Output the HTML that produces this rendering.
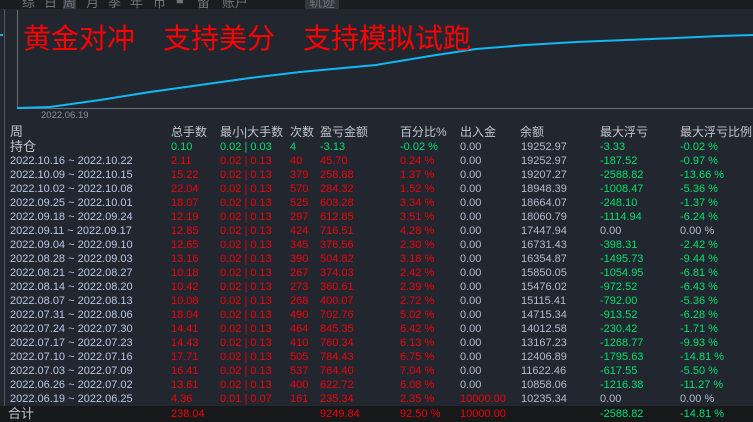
<!DOCTYPE html>
<html><head><meta charset="utf-8"><style>
*{margin:0;padding:0}
body{width:753px;height:422px;overflow:hidden;background:#22272f;font-family:"Liberation Sans","Noto Sans CJK SC",sans-serif;position:relative}
.top{position:absolute;left:0;top:0;width:753px;height:9px;background:#1b1c1e;overflow:hidden}
.top span{position:absolute;top:-8px;font-size:13px;color:#70757c}
.big{position:absolute;left:23px;top:17px;font-size:28px;color:#f00;font-family:"Noto Sans CJK SC",sans-serif;white-space:pre;line-height:40px}
.r{position:absolute;left:0;width:753px;height:14px;font-size:11px;line-height:14px;white-space:nowrap}
.r span{position:absolute}
.d{color:#b8c8e4}.g{color:#b4bccc}.R{color:#f0000a}.G{color:#00e070}.h{color:#c0c6d0;font-size:13px}
</style></head><body>
<div class="top"><span style="left:22px">综</span><span style="left:44px">日</span><span style="left:63px;background:#33373d">周</span><span style="left:86px">月</span><span style="left:108px">季</span><span style="left:130px">年</span><span style="left:153px">币</span><span style="left:176px">■</span><span style="left:197px">留</span><span style="left:222px">账户</span><span style="left:305px;background:#33373d;padding:0 4px">轨迹</span></div>
<div style="position:absolute;left:4px;top:9px;width:1px;height:413px;background:#55595f"></div>
<div style="position:absolute;left:0;top:34px;width:3px;height:2px;background:#1ab0f0"></div>
<div style="position:absolute;left:17px;top:10px;width:1px;height:99px;background:#6a6e74"></div>
<div style="position:absolute;left:17px;top:108px;width:736px;height:1px;background:#6a6e74"></div>
<svg style="position:absolute;left:0;top:0" width="753" height="120"><polyline fill="none" stroke="#12b8f4" stroke-width="2" points="17,108 50,107 100,100 150,92 200,85 250,78 300,72 376,65 430,56 476,49 526,45 576,42 626,40 676,38 720,36 753,35"/></svg>
<div class="big">黄金对冲　支持美分　支持模拟试跑</div>
<div style="position:absolute;left:41px;top:110px;font-size:9.5px;color:#8a9098">2022.06.19</div>
<div style="position:absolute;left:0;top:406px;width:753px;height:16px;background:#17181a"></div>
<div class="r" style="top:125px"><span class="h" style="left:10px">周</span><span class="h" style="left:171px;font-size:12px">总手数</span><span class="h" style="left:220px;font-size:12px">最小|大手数</span><span class="h" style="left:290px;font-size:12px">次数</span><span class="h" style="left:320px;font-size:12px">盈亏金额</span><span class="h" style="left:400px;font-size:12px">百分比%</span><span class="h" style="left:460px;font-size:12px">出入金</span><span class="h" style="left:520px;font-size:12px">余额</span><span class="h" style="left:600px;font-size:12px">最大浮亏</span><span class="h" style="left:680px;font-size:12px">最大浮亏比例</span></div>
<div class="r" style="top:140px"><span class="h" style="left:10px">持仓</span><span class="G" style="left:171px">0.10</span><span class="G" style="left:220px">0.02 | 0.03</span><span class="G" style="left:290px">4</span><span class="G" style="left:320px">-3.13</span><span class="G" style="left:400px">-0.02 %</span><span class="g" style="left:460px">0.00</span><span class="g" style="left:521px">19252.97</span><span class="G" style="left:600px">-3.33</span><span class="G" style="left:680px">-0.02 %</span></div>
<div class="r" style="top:154px"><span class="d" style="left:10px">2022.10.16 ~ 2022.10.22</span><span class="R" style="left:171px">2.11</span><span class="R" style="left:220px">0.02 | 0.13</span><span class="R" style="left:290px">40</span><span class="R" style="left:320px">45.70</span><span class="R" style="left:400px">0.24 %</span><span class="g" style="left:460px">0.00</span><span class="g" style="left:521px">19252.97</span><span class="G" style="left:600px">-187.52</span><span class="G" style="left:680px">-0.97 %</span></div>
<div class="r" style="top:168px"><span class="d" style="left:10px">2022.10.09 ~ 2022.10.15</span><span class="R" style="left:171px">15.22</span><span class="R" style="left:220px">0.02 | 0.13</span><span class="R" style="left:290px">379</span><span class="R" style="left:320px">258.88</span><span class="R" style="left:400px">1.37 %</span><span class="g" style="left:460px">0.00</span><span class="g" style="left:521px">19207.27</span><span class="G" style="left:600px">-2588.82</span><span class="G" style="left:680px">-13.66 %</span></div>
<div class="r" style="top:182px"><span class="d" style="left:10px">2022.10.02 ~ 2022.10.08</span><span class="R" style="left:171px">22.04</span><span class="R" style="left:220px">0.02 | 0.13</span><span class="R" style="left:290px">570</span><span class="R" style="left:320px">284.32</span><span class="R" style="left:400px">1.52 %</span><span class="g" style="left:460px">0.00</span><span class="g" style="left:521px">18948.39</span><span class="G" style="left:600px">-1008.47</span><span class="G" style="left:680px">-5.36 %</span></div>
<div class="r" style="top:196px"><span class="d" style="left:10px">2022.09.25 ~ 2022.10.01</span><span class="R" style="left:171px">18.07</span><span class="R" style="left:220px">0.02 | 0.13</span><span class="R" style="left:290px">525</span><span class="R" style="left:320px">603.28</span><span class="R" style="left:400px">3.34 %</span><span class="g" style="left:460px">0.00</span><span class="g" style="left:521px">18664.07</span><span class="G" style="left:600px">-248.10</span><span class="G" style="left:680px">-1.37 %</span></div>
<div class="r" style="top:210px"><span class="d" style="left:10px">2022.09.18 ~ 2022.09.24</span><span class="R" style="left:171px">12.19</span><span class="R" style="left:220px">0.02 | 0.13</span><span class="R" style="left:290px">297</span><span class="R" style="left:320px">612.85</span><span class="R" style="left:400px">3.51 %</span><span class="g" style="left:460px">0.00</span><span class="g" style="left:521px">18060.79</span><span class="G" style="left:600px">-1114.94</span><span class="G" style="left:680px">-6.24 %</span></div>
<div class="r" style="top:224px"><span class="d" style="left:10px">2022.09.11 ~ 2022.09.17</span><span class="R" style="left:171px">12.85</span><span class="R" style="left:220px">0.02 | 0.13</span><span class="R" style="left:290px">424</span><span class="R" style="left:320px">716.51</span><span class="R" style="left:400px">4.28 %</span><span class="g" style="left:460px">0.00</span><span class="g" style="left:521px">17447.94</span><span class="g" style="left:600px">0.00</span><span class="g" style="left:680px">0.00 %</span></div>
<div class="r" style="top:238px"><span class="d" style="left:10px">2022.09.04 ~ 2022.09.10</span><span class="R" style="left:171px">12.65</span><span class="R" style="left:220px">0.02 | 0.13</span><span class="R" style="left:290px">345</span><span class="R" style="left:320px">376.56</span><span class="R" style="left:400px">2.30 %</span><span class="g" style="left:460px">0.00</span><span class="g" style="left:521px">16731.43</span><span class="G" style="left:600px">-398.31</span><span class="G" style="left:680px">-2.42 %</span></div>
<div class="r" style="top:252px"><span class="d" style="left:10px">2022.08.28 ~ 2022.09.03</span><span class="R" style="left:171px">13.16</span><span class="R" style="left:220px">0.02 | 0.13</span><span class="R" style="left:290px">390</span><span class="R" style="left:320px">504.82</span><span class="R" style="left:400px">3.18 %</span><span class="g" style="left:460px">0.00</span><span class="g" style="left:521px">16354.87</span><span class="G" style="left:600px">-1495.73</span><span class="G" style="left:680px">-9.44 %</span></div>
<div class="r" style="top:266px"><span class="d" style="left:10px">2022.08.21 ~ 2022.08.27</span><span class="R" style="left:171px">10.18</span><span class="R" style="left:220px">0.02 | 0.13</span><span class="R" style="left:290px">267</span><span class="R" style="left:320px">374.03</span><span class="R" style="left:400px">2.42 %</span><span class="g" style="left:460px">0.00</span><span class="g" style="left:521px">15850.05</span><span class="G" style="left:600px">-1054.95</span><span class="G" style="left:680px">-6.81 %</span></div>
<div class="r" style="top:280px"><span class="d" style="left:10px">2022.08.14 ~ 2022.08.20</span><span class="R" style="left:171px">10.42</span><span class="R" style="left:220px">0.02 | 0.13</span><span class="R" style="left:290px">273</span><span class="R" style="left:320px">360.61</span><span class="R" style="left:400px">2.39 %</span><span class="g" style="left:460px">0.00</span><span class="g" style="left:521px">15476.02</span><span class="G" style="left:600px">-972.52</span><span class="G" style="left:680px">-6.43 %</span></div>
<div class="r" style="top:294px"><span class="d" style="left:10px">2022.08.07 ~ 2022.08.13</span><span class="R" style="left:171px">10.08</span><span class="R" style="left:220px">0.02 | 0.13</span><span class="R" style="left:290px">268</span><span class="R" style="left:320px">400.07</span><span class="R" style="left:400px">2.72 %</span><span class="g" style="left:460px">0.00</span><span class="g" style="left:521px">15115.41</span><span class="G" style="left:600px">-792.00</span><span class="G" style="left:680px">-5.36 %</span></div>
<div class="r" style="top:308px"><span class="d" style="left:10px">2022.07.31 ~ 2022.08.06</span><span class="R" style="left:171px">18.04</span><span class="R" style="left:220px">0.02 | 0.13</span><span class="R" style="left:290px">490</span><span class="R" style="left:320px">702.76</span><span class="R" style="left:400px">5.02 %</span><span class="g" style="left:460px">0.00</span><span class="g" style="left:521px">14715.34</span><span class="G" style="left:600px">-913.52</span><span class="G" style="left:680px">-6.28 %</span></div>
<div class="r" style="top:322px"><span class="d" style="left:10px">2022.07.24 ~ 2022.07.30</span><span class="R" style="left:171px">14.41</span><span class="R" style="left:220px">0.02 | 0.13</span><span class="R" style="left:290px">464</span><span class="R" style="left:320px">845.35</span><span class="R" style="left:400px">6.42 %</span><span class="g" style="left:460px">0.00</span><span class="g" style="left:521px">14012.58</span><span class="G" style="left:600px">-230.42</span><span class="G" style="left:680px">-1.71 %</span></div>
<div class="r" style="top:336px"><span class="d" style="left:10px">2022.07.17 ~ 2022.07.23</span><span class="R" style="left:171px">14.43</span><span class="R" style="left:220px">0.02 | 0.13</span><span class="R" style="left:290px">410</span><span class="R" style="left:320px">760.34</span><span class="R" style="left:400px">6.13 %</span><span class="g" style="left:460px">0.00</span><span class="g" style="left:521px">13167.23</span><span class="G" style="left:600px">-1268.77</span><span class="G" style="left:680px">-9.93 %</span></div>
<div class="r" style="top:350px"><span class="d" style="left:10px">2022.07.10 ~ 2022.07.16</span><span class="R" style="left:171px">17.71</span><span class="R" style="left:220px">0.02 | 0.13</span><span class="R" style="left:290px">505</span><span class="R" style="left:320px">784.43</span><span class="R" style="left:400px">6.75 %</span><span class="g" style="left:460px">0.00</span><span class="g" style="left:521px">12406.89</span><span class="G" style="left:600px">-1795.63</span><span class="G" style="left:680px">-14.81 %</span></div>
<div class="r" style="top:364px"><span class="d" style="left:10px">2022.07.03 ~ 2022.07.09</span><span class="R" style="left:171px">16.41</span><span class="R" style="left:220px">0.02 | 0.13</span><span class="R" style="left:290px">537</span><span class="R" style="left:320px">764.40</span><span class="R" style="left:400px">7.04 %</span><span class="g" style="left:460px">0.00</span><span class="g" style="left:521px">11622.46</span><span class="G" style="left:600px">-617.55</span><span class="G" style="left:680px">-5.50 %</span></div>
<div class="r" style="top:378px"><span class="d" style="left:10px">2022.06.26 ~ 2022.07.02</span><span class="R" style="left:171px">13.61</span><span class="R" style="left:220px">0.02 | 0.13</span><span class="R" style="left:290px">400</span><span class="R" style="left:320px">622.72</span><span class="R" style="left:400px">6.08 %</span><span class="g" style="left:460px">0.00</span><span class="g" style="left:521px">10858.06</span><span class="G" style="left:600px">-1216.38</span><span class="G" style="left:680px">-11.27 %</span></div>
<div class="r" style="top:392px"><span class="d" style="left:10px">2022.06.19 ~ 2022.06.25</span><span class="R" style="left:171px">4.36</span><span class="R" style="left:220px">0.01 | 0.07</span><span class="R" style="left:290px">161</span><span class="R" style="left:320px">235.34</span><span class="R" style="left:400px">2.35 %</span><span class="R" style="left:460px">10000.00</span><span class="g" style="left:521px">10235.34</span><span class="g" style="left:600px">0.00</span><span class="g" style="left:680px">0.00 %</span></div>
<div class="r" style="top:407px"><span class="h" style="left:8px">合计</span><span class="R" style="left:171px">238.04</span><span class="R" style="left:320px">9249.84</span><span class="R" style="left:400px">92.50 %</span><span class="R" style="left:460px">10000.00</span><span class="G" style="left:600px">-2588.82</span><span class="G" style="left:680px">-14.81 %</span></div>
</body></html>
